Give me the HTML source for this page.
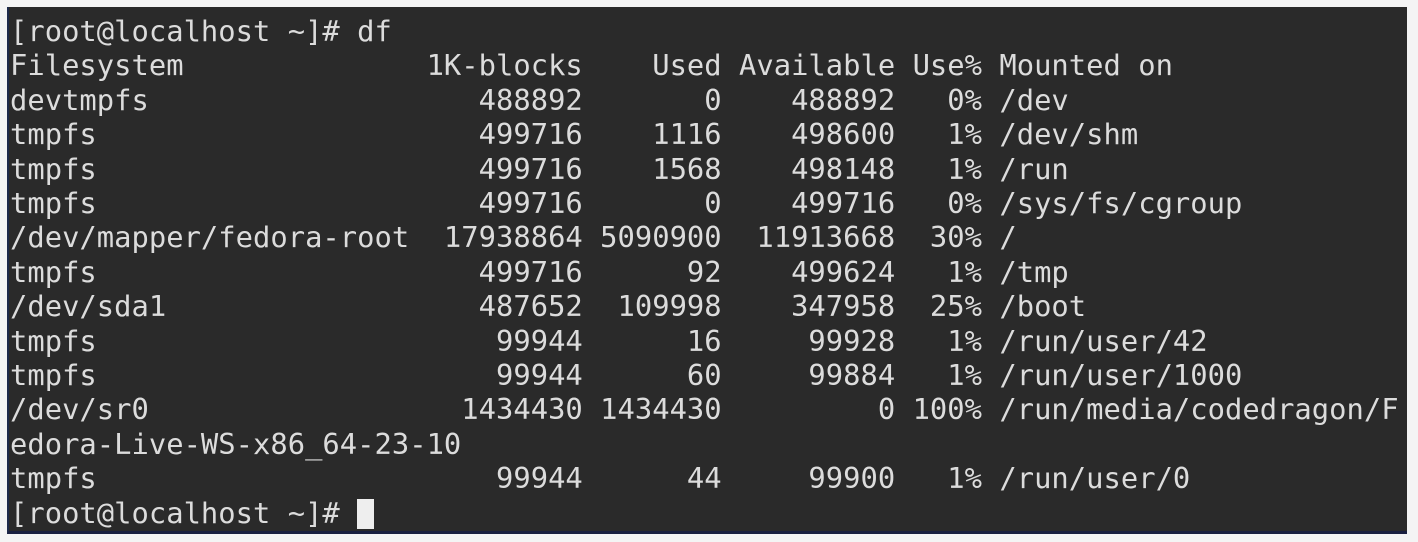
<!DOCTYPE html>
<html><head><meta charset="utf-8"><style>
html,body{margin:0;padding:0;background:#f4f4f4;width:1418px;height:542px;overflow:hidden}
.term{position:absolute;left:7px;top:7px;width:1400px;height:527px;background:#2a2a2a;border-left:2px solid #1e2a4a;border-bottom:3px solid #1a2040;box-sizing:border-box}
pre{position:absolute;left:1px;top:7px;margin:0;font-family:"DejaVu Sans Mono","Liberation Mono",monospace;font-size:28.8px;line-height:34.4px;color:#dcdcdc;letter-spacing:0.02px}
.cur{display:inline-block;width:17px;height:30px;background:#eeeeee;vertical-align:-6px}
</style></head><body><div class="term"><pre>[root@localhost ~]# df
Filesystem              1K-blocks    Used Available Use% Mounted on
devtmpfs                   488892       0    488892   0% /dev
tmpfs                      499716    1116    498600   1% /dev/shm
tmpfs                      499716    1568    498148   1% /run
tmpfs                      499716       0    499716   0% /sys/fs/cgroup
/dev/mapper/fedora-root  17938864 5090900  11913668  30% /
tmpfs                      499716      92    499624   1% /tmp
/dev/sda1                  487652  109998    347958  25% /boot
tmpfs                       99944      16     99928   1% /run/user/42
tmpfs                       99944      60     99884   1% /run/user/1000
/dev/sr0                  1434430 1434430         0 100% /run/media/codedragon/F
edora-Live-WS-x86_64-23-10
tmpfs                       99944      44     99900   1% /run/user/0
[root@localhost ~]# <span class="cur"></span></pre></div></body></html>
